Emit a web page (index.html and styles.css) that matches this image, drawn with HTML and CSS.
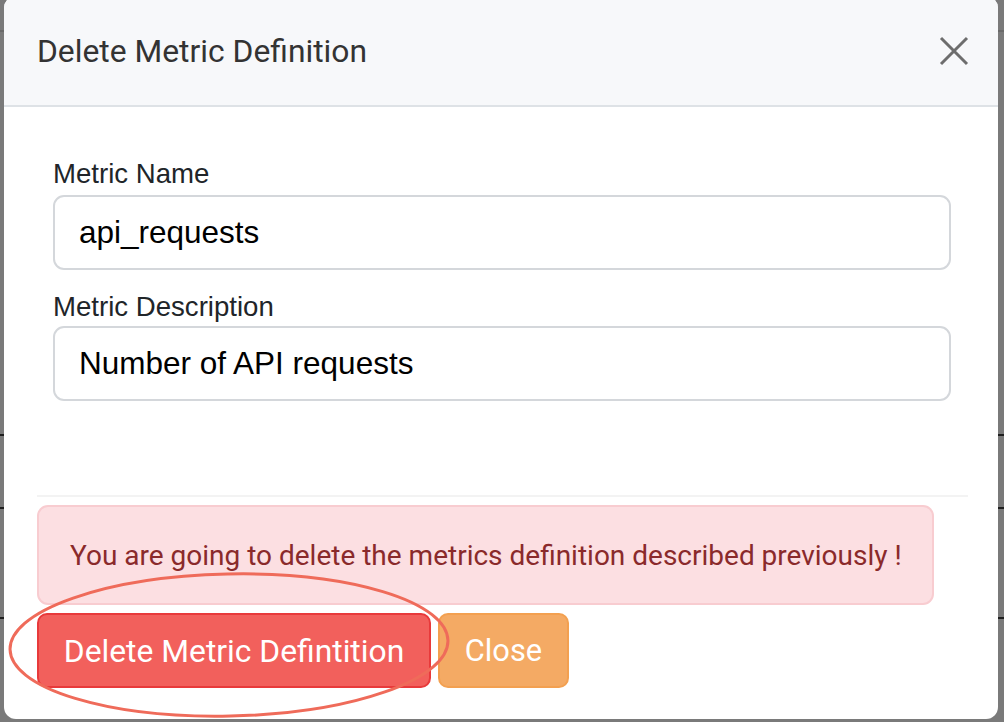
FILE: index.html
```html
<!DOCTYPE html>
<html>
<head>
<meta charset="utf-8">
<link rel="stylesheet" href="styles.css">
</head>
<body>
<div class="backdrop">
  <div class="modal">
    <div class="modal-header">
      <h5 class="modal-title">Delete Metric Definition</h5>
      <button class="close-btn" aria-label="Close">
        <svg width="30" height="30" viewBox="0 0 30 30"><path d="M2 2 L28 28 M28 2 L2 28" stroke="#6d6d6d" stroke-width="3" fill="none"/></svg>
      </button>
    </div>
    <div class="modal-body">
      <label class="form-label">Metric Name</label>
      <input class="form-control" type="text" value="api_requests" readonly>
      <label class="form-label second">Metric Description</label>
      <input class="form-control" type="text" value="Number of API requests" readonly>
    </div>
    <div class="modal-footer">
      <div class="alert">You are going to delete the metrics definition described previously !</div>
      <div class="actions">
        <button class="btn btn-danger">Delete Metric Defintition</button>
        <button class="btn btn-warning">Close</button>
      </div>
      <svg class="highlight" width="460" height="160" viewBox="0 0 460 160">
        <ellipse cx="226" cy="76" rx="219" ry="71" transform="rotate(-1.2 226 76)" fill="none" stroke="#ef6b5a" stroke-width="3"/>
      </svg>
    </div>
  </div>
</div>
</body>
</html>
```
FILE: styles.css
```css
html, body {
  margin: 0;
  padding: 0;
}
body {
  width: 1004px;
  height: 722px;
  overflow: hidden;
  font-family: Roboto, "Liberation Sans", Arial, sans-serif;
  background-color: #7a7a7a;
  background-image:
    linear-gradient(to bottom, transparent 30px, #6a6a6a 30px, #6a6a6a 32px, transparent 32px),
    linear-gradient(to bottom, transparent 434px, #1e1e1e 434px, #1e1e1e 436px, transparent 436px),
    linear-gradient(to bottom, transparent 507px, #1e1e1e 507px, #1e1e1e 509px, transparent 509px),
    linear-gradient(to bottom, transparent 617px, #1e1e1e 617px, #1e1e1e 619px, transparent 619px);
}
.backdrop {
  padding: 0 6px 0 4px;
}
.modal {
  margin-top: -4px;
  height: 723px;
  background: #fff;
  border-radius: 12px;
  overflow: hidden;
  display: flex;
  flex-direction: column;
}
.modal-header {
  height: 111px;
  box-sizing: border-box;
  background: #f7f8fa;
  border-bottom: 2px solid #dee2e6;
  display: flex;
  align-items: center;
  justify-content: space-between;
  padding: 0 29px 0 33px;
}
.modal-title {
  margin: 0;
  font-size: 31.8px;
  font-weight: 400;
  color: #333;
}
.close-btn {
  border: 0;
  background: none;
  padding: 0;
  width: 30px;
  height: 30px;
  display: flex;
}
.modal-body {
  padding: 50px 47px 0 49px;
  display: flex;
  flex-direction: column;
  height: 388px;
  box-sizing: border-box;
}
.form-label {
  font-family: "Liberation Sans", Arial, sans-serif;
  font-size: 27.6px;
  color: #212529;
  line-height: 34px;
  margin-bottom: 4px;
}
.form-label.second {
  margin-top: 20px;
  margin-bottom: 2px;
}
.form-control {
  height: 75px;
  box-sizing: border-box;
  border: 2px solid #d4d7db;
  border-radius: 11px;
  padding: 0 24px;
  font-family: "Liberation Sans", Arial, sans-serif;
  font-size: 31.5px;
  color: #000;
  background: #fff;
  outline: none;
  width: 100%;
}
.modal-footer {
  position: relative;
  margin: 0 30px 0 33px;
  border-top: 2px solid #f3f3f3;
  padding-top: 8px;
}
.alert {
  width: 897px;
  height: 100px;
  box-sizing: border-box;
  background: #fcdfe2;
  border: 2px solid #f8ccd0;
  border-radius: 11px;
  color: #8a2a2b;
  font-size: 28px;
  padding-left: 31px;
  display: flex;
  align-items: center;
}
.actions {
  display: flex;
  gap: 7px;
  margin-top: 8px;
}
.btn {
  height: 75px;
  box-sizing: border-box;
  border-radius: 10px;
  color: #fff;
  font-family: Roboto, "Liberation Sans", Arial, sans-serif;
  font-size: 31.8px;
  padding: 0;
  text-align: center;
  cursor: pointer;
}
.btn-danger {
  width: 394px;
  background: #f2605c;
  border: 2px solid #e83a3b;
}
.btn-warning {
  width: 131px;
  background: #f4aa64;
  border: 2px solid #f3a050;
  font-size: 30.8px;
}
.highlight {
  position: absolute;
  left: -34px;
  top: 72px;
  pointer-events: none;
}
```
